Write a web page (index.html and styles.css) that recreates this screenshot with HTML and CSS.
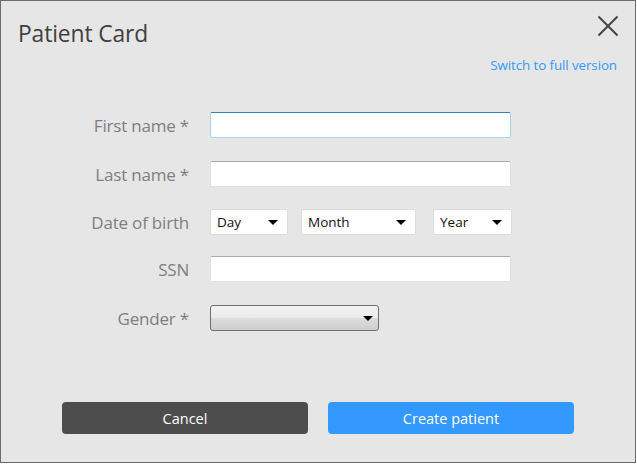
FILE: index.html
```html
<!DOCTYPE html>
<html>
<head>
<meta charset="utf-8">
<link rel="stylesheet" href="styles.css">
</head>
<body>
<div class="dialog">
  <div class="header">
    <div class="title">Patient Card</div>
    <button class="close" aria-label="Close">
      <svg width="22" height="22" viewBox="0 0 22 22"><path d="M1.5 1.5 L20.5 20.5 M20.5 1.5 L1.5 20.5" stroke="#444" stroke-width="2" fill="none"/></svg>
    </button>
  </div>
  <div class="link-row"><a class="link" href="#">Switch to full version</a></div>
  <div class="form">
    <div class="label">First name *</div>
    <div class="field"><div class="input focused"></div></div>
    <div class="label">Last name *</div>
    <div class="field"><div class="input"></div></div>
    <div class="label">Date of birth</div>
    <div class="field date">
      <div class="select day"><span>Day</span><i class="arrow"></i></div>
      <div class="select month"><span>Month</span><i class="arrow"></i></div>
      <div class="select year"><span>Year</span><i class="arrow"></i></div>
    </div>
    <div class="label">SSN</div>
    <div class="field"><div class="input"></div></div>
    <div class="label">Gender *</div>
    <div class="field"><div class="gender"><i class="arrow"></i></div></div>
  </div>
  <div class="footer">
    <button class="btn cancel">Cancel</button>
    <button class="btn create">Create patient</button>
  </div>
</div>
</body>
</html>
```
FILE: styles.css
```css
html, body {
  margin: 0;
  padding: 0;
  background: #ffffff;
}
body {
  font-family: "Open Sans", "Noto Sans", sans-serif;
}
.dialog {
  box-sizing: border-box;
  width: 636px;
  height: 463px;
  border: 1px solid #6b6b6b;
  background: #e6e6e6;
  display: flex;
  flex-direction: column;
}
.header {
  height: 49px;
  display: flex;
  justify-content: space-between;
  align-items: flex-start;
  padding: 0 16px 0 17px;
}
.title {
  margin-top: 19px;
  font-size: 22.8px;
  line-height: 28px;
  color: #404040;
  letter-spacing: -0.1px;
}
.close {
  margin-top: 14px;
  padding: 0;
  border: 0;
  background: none;
  width: 22px;
  height: 22px;
  display: block;
}
.close svg { display: block; }
.link-row {
  height: 30px;
  display: flex;
  justify-content: flex-end;
  align-items: center;
  padding-right: 18px;
}
.link {
  font-size: 13.4px;
  color: #3399ff;
  text-decoration: none;
  letter-spacing: -0.1px;
}
.form {
  margin-top: 32px;
  display: grid;
  grid-template-columns: 188px 302px;
  grid-template-rows: 49px 48px 47px 49px 26px;
  column-gap: 21px;
  align-items: start;
}
.label {
  text-align: right;
  font-size: 17px;
  line-height: 27px;
  color: #7f7f7f;
  letter-spacing: -0.2px;
}
.field {
  height: 26px;
}
.input {
  box-sizing: border-box;
  width: 301px;
  height: 26px;
  background: #fff;
  border: 1px solid #e0e0e0;
  border-top-color: #ababab;
  border-radius: 2px;
}
.input.focused {
  border-color: #a9d1f0;
  border-top-color: #3a7fb6;
}
.date {
  display: flex;
}
.select {
  box-sizing: border-box;
  height: 26px;
  background: #fff;
  border: 1px solid #dcdcdc;
  border-radius: 2px;
  display: flex;
  align-items: center;
  justify-content: space-between;
  padding: 0 9px 0 6px;
  font-size: 13.5px;
  color: #111;
}
.day { width: 78px; }
.month { width: 115px; margin-left: 13px; }
.year { width: 79px; margin-left: 17px; }
.arrow {
  display: block;
  width: 0;
  height: 0;
  border-left: 5px solid transparent;
  border-right: 5px solid transparent;
  border-top: 5px solid #000;
}
.gender {
  box-sizing: border-box;
  width: 169px;
  height: 26px;
  border: 1px solid #6f6f6f;
  border-radius: 3px;
  background: linear-gradient(to bottom, #f3f3f3 0%, #eaeaea 50%, #dcdcdc 50%, #cfcfcf 100%);
  display: flex;
  align-items: center;
  justify-content: flex-end;
  padding-right: 5px;
}
.footer {
  margin-top: auto;
  padding: 0 0 28px 61px;
  display: flex;
  gap: 20px;
}
.btn {
  width: 246px;
  height: 32px;
  border: 0;
  border-radius: 4px;
  font-family: "Open Sans", "Noto Sans", sans-serif;
  font-size: 14.5px;
  color: #fff;
  padding: 0;
}
.cancel { background: #4d4d4d; }
.create { background: #3399ff; }
```
